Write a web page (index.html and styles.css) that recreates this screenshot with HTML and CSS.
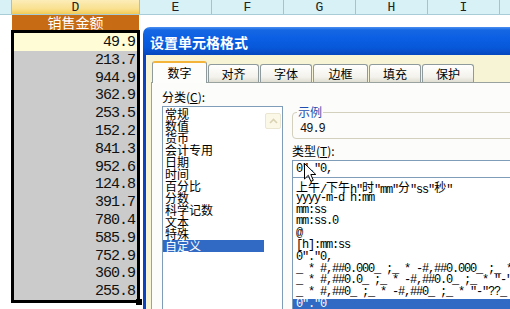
FILE: index.html
```html
<!DOCTYPE html>
<html lang="zh-CN">

<head>
    <meta charset="UTF-8">
    <meta name="viewport" content="width=device-width, initial-scale=1.0">
    <title>设置单元格格式</title>
    <link rel="stylesheet" href="styles.css">
</head>

<body>
    <div class="sheet">
        <div class="col-heads">
            <div class="ch ch-c"></div>
            <div class="ch ch-d">D</div>
            <div class="ch">E</div>
            <div class="ch">F</div>
            <div class="ch">G</div>
            <div class="ch">H</div>
            <div class="ch">I</div>
            <div class="ch">J</div>
        </div>
        <div class="rows">
            <div class="lead"></div>
            <div class="col-d">
                <div class="title-cell">销售金额</div>
                <div class="sel">
                    <div class="num active">49.9</div>
                    <div class="num">213.7</div>
                    <div class="num">944.9</div>
                    <div class="num">362.9</div>
                    <div class="num">253.5</div>
                    <div class="num">152.2</div>
                    <div class="num">841.3</div>
                    <div class="num">952.6</div>
                    <div class="num">124.8</div>
                    <div class="num">391.7</div>
                    <div class="num">780.4</div>
                    <div class="num">585.9</div>
                    <div class="num">752.9</div>
                    <div class="num">360.9</div>
                    <div class="num">255.8</div>
                    <div class="handle"></div>
                </div>
            </div>
        </div>
    </div>

    <!-- format cells dialog, sits over the sheet -->
    <div class="dialog">
        <div class="titlebar">设置单元格格式</div>
        <div class="dlg-body">
            <div class="tabs">
                <div class="tab on w55">数字</div>
                <div class="tab w51">对齐</div>
                <div class="tab w52">字体</div>
                <div class="tab w55">边框</div>
                <div class="tab w52">填充</div>
                <div class="tab w52">保护</div>
            </div>
            <div class="panel">
                <div class="cat-col">
                    <div class="label">分类(<u>C</u>):</div>
                    <div class="cat-list">
                        <ul class="cat-items">
                            <li>常规</li>
                            <li>数值</li>
                            <li>货币</li>
                            <li>会计专用</li>
                            <li>日期</li>
                            <li>时间</li>
                            <li>百分比</li>
                            <li>分数</li>
                            <li>科学记数</li>
                            <li>文本</li>
                            <li>特殊</li>
                            <li class="on">自定义</li>
                        </ul>
                        <div class="scroll">
                            <div class="scroll-btn">
                                <svg width="9" height="6" viewBox="0 0 9 6">
                                    <polyline points="1,5 4.5,1.5 8,5" fill="none" stroke="#d9d3b4" stroke-width="1.6"/>
                                </svg>
                            </div>
                        </div>
                    </div>
                </div>
                <div class="type-col">
                    <fieldset class="sample">
                        <legend>示例</legend>
                        <div class="sample-val">49.9</div>
                    </fieldset>
                    <div class="label type-label">类型(<u>T</u>):</div>
                    <div class="type-input">0"."0,<svg class="cursor" width="13" height="20" viewBox="0 0 13 20"><path d="M0.5 0.5 L0.5 16 L4.3 12.3 L6.8 18.3 L9.3 17.3 L6.8 11.5 L11.8 11.5 Z" fill="#ffffff" stroke="#000000" stroke-width="1"/></svg></div>
                    <div class="type-list">
                        <div class="t"><span class="cj">上午</span>/<span class="cj">下午</span>h"<span class="cj">时</span>"mm"<span class="cj">分</span>"ss"<span class="cj">秒</span>"</div>
                        <div class="t">yyyy-m-d h:mm</div>
                        <div class="t">mm:ss</div>
                        <div class="t">mm:ss.0</div>
                        <div class="t">@</div>
                        <div class="t">[h]:mm:ss</div>
                        <div class="t">0"."0,</div>
                        <div class="t">_ * #,##0.000_ ;_ * -#,##0.000_ ;_ * "-"???_ ;_ @_ </div>
                        <div class="t">_ * #,##0.0_ ;_ * -#,##0.0_ ;_ * "-"?_ ;_ @_ </div>
                        <div class="t">_ * #,##0_ ;_ * -#,##0_ ;_ * "-"??_ ;_ @_ </div>
                        <div class="t on">0"."0</div>
                    </div>
                </div>
            </div>
        </div>
    </div>
</body>

</html>
```

FILE: styles.css
```css
body {
    margin: 0;
    width: 510px;
    height: 309px;
    overflow: hidden;
    position: relative;
    background-color: #ffffff;
    font-family: "Noto Sans CJK SC", sans-serif;
}

/* sheet */

.col-heads {
    display: flex;
    height: 15px;
    box-sizing: border-box;
    background-color: #d7f1f6;
    border-bottom: 1px solid #a9cdd6;
}

.ch {
    flex: none;
    width: 72px;
    box-sizing: border-box;
    border-right: 1px solid #9fc6d0;
    text-align: center;
    font-family: "Liberation Mono", monospace;
    font-size: 13px;
    line-height: 15px;
    color: #222222;
}

.ch-c {
    width: 12px;
}

.ch-d {
    width: 128px;
    background: linear-gradient(#fcedb9, #f9e08e 65%, #f1cb55);
}

.rows {
    display: flex;
}

.lead {
    width: 11px;
}

.col-d {
    width: 129px;
}

.title-cell {
    width: 127px;
    height: 15px;
    margin-left: 1px;
    background-color: #c86b15;
    color: #ffffff;
    font-size: 14px;
    line-height: 15px;
    text-align: center;
}

.sel {
    position: relative;
    height: 273px;
    box-sizing: border-box;
    border: 3px solid #000000;
    background-color: #cbcbcb;
}

.num {
    height: 17.8px;
    line-height: 20px;
    padding-right: 2px;
    text-align: right;
    font-family: "Liberation Mono", monospace;
    font-size: 15px;
    letter-spacing: -1px;
    color: #111111;
}

.num.active {
    background-color: #fffcd6;
}

.handle {
    position: absolute;
    right: -5px;
    bottom: -5px;
    width: 6px;
    height: 6px;
    background-color: #000000;
}

/* dialog */

.dialog {
    position: absolute;
    left: 143px;
    top: 27px;
    width: 400px;
    height: 300px;
}

.titlebar {
    height: 28px;
    box-sizing: border-box;
    padding: 2px 0 0 7px;
    border-radius: 7px 0 0 0;
    background: linear-gradient(#4b8ff2 0, #1667e2 3px, #0b5fe3 40%, #0857d9 75%, #0546bd 100%);
    color: #ffffff;
    font-size: 14px;
    font-weight: bold;
    line-height: 26px;
}

.dlg-body {
    height: 272px;
    box-sizing: border-box;
    border-left: 3px solid #0b44c2;
    background-color: #f7f3d5;
    padding: 6px 0 0 5px;
}

.tabs {
    display: flex;
    align-items: flex-end;
    gap: 1px;
    height: 21px;
    padding-left: 1px;
}

.tab {
    height: 18px;
    box-sizing: border-box;
    border: 1px solid #8f9a9c;
    border-bottom: none;
    border-radius: 3px 3px 0 0;
    background: linear-gradient(#ffffff, #f3f2ec 70%, #e0ded2);
    font-size: 12px;
    line-height: 17px;
    text-align: center;
    color: #000000;
}

.tab.on {
    position: relative;
    z-index: 1;
    height: 22px;
    margin-bottom: -1px;
    border-top: 2px solid #f4b43a;
    background: #fdfdfb;
    line-height: 19px;
}

.w51 { width: 51px; }
.w52 { width: 52px; }
.w55 { width: 55px; }

.panel {
    display: flex;
    gap: 9px;
    height: 240px;
    box-sizing: border-box;
    border: 1px solid #9aa29f;
    background-color: #fcfcfa;
    padding: 7px 0 0 10px;
}

.label {
    height: 14px;
    font-size: 12px;
    line-height: 14px;
    color: #000000;
}

.cat-col {
    flex: none;
    width: 121px;
}

.cat-list {
    display: flex;
    height: 210px;
    margin-top: 2px;
    border: 1px solid #7f9db9;
    background-color: #ffffff;
}

.cat-items {
    flex: 1;
    margin: 0;
    padding: 1px 0 0 0;
    list-style: none;
}

.cat-items li {
    height: 12px;
    padding-left: 2px;
    font-size: 12px;
    line-height: 12px;
    color: #000000;
}

.cat-items li.on {
    background-color: #316ac5;
    color: #ffffff;
}

.scroll {
    width: 18px;
}

.scroll-btn {
    display: flex;
    align-items: center;
    justify-content: center;
    height: 14px;
    margin: 6px 1px 0 1px;
    border: 1px solid #ebe6d0;
    border-radius: 2px;
    background-color: #fbf8e8;
}

.type-col {
    flex: 1;
    margin-top: 15px;
}

.sample {
    margin: 0;
    padding: 0 6px 3px 4px;
    border: 1px solid #d3d0bd;
    border-radius: 4px;
}

.sample legend {
    padding: 0 1px;
    font-size: 12px;
    line-height: 14px;
    color: #1e4fb0;
}

.sample-val {
    margin-top: 4px;
    padding-left: 3px;
    font-family: "Liberation Mono", monospace;
    font-size: 12px;
    letter-spacing: -1px;
    line-height: 12px;
    color: #111111;
}

.type-label {
    margin-top: 5px;
}

.type-input {
    position: relative;
    height: 18px;
    box-sizing: border-box;
    margin-top: 2px;
    border: 1px solid #7f9db9;
    padding-left: 3px;
    background-color: #ffffff;
    font-family: "Liberation Mono", monospace;
    font-size: 12px;
    letter-spacing: -1.2px;
    line-height: 16px;
    color: #000000;
    white-space: nowrap;
}

.cursor {
    position: absolute;
    left: 11px;
    top: 2px;
}

.type-list {
    height: 140px;
    box-sizing: border-box;
    border: 1px solid #7f9db9;
    border-top: none;
    padding-top: 3px;
    background-color: #ffffff;
    overflow: hidden;
}

.t {
    height: 11.8px;
    padding-left: 3px;
    font-family: "Liberation Mono", monospace;
    font-size: 12px;
    letter-spacing: -1.2px;
    line-height: 11.8px;
    color: #000000;
    white-space: pre;
}

.t.on {
    background-color: #316ac5;
    color: #ffffff;
}

.cj {
    font-family: "Noto Sans CJK SC", sans-serif;
    font-size: 12px;
    letter-spacing: 0;
    vertical-align: 1px;
}
```
